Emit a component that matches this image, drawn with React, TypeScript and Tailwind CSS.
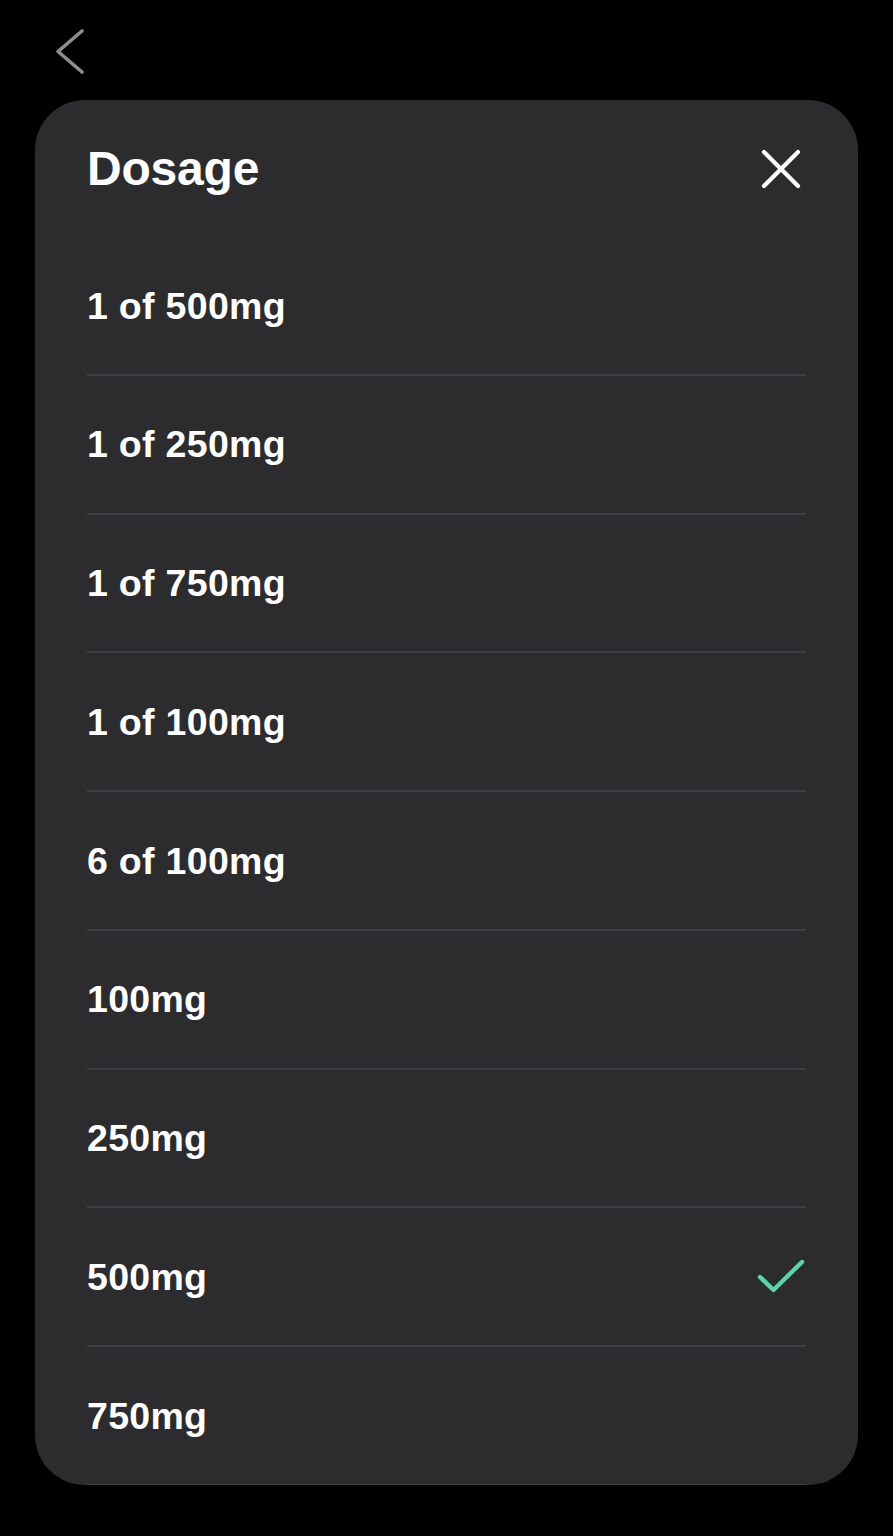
import React from "react";

const items = [
  "1 of 500mg",
  "1 of 250mg",
  "1 of 750mg",
  "1 of 100mg",
  "6 of 100mg",
  "100mg",
  "250mg",
  "500mg",
  "750mg",
];

export default function App() {
  return (
    <div
      className="w-[893px] h-[1536px] bg-black overflow-hidden"
      style={{ fontFamily: '"Liberation Sans", Arial, sans-serif' }}
    >
      <div className="h-[100px] pl-[55px] pt-[27px]">
        <svg width="30" height="48" viewBox="0 0 30 48" fill="none">
          <path d="M27 4 L3 24.5 L27 45" stroke="#8e8e92" strokeWidth="3.6" strokeLinecap="round" strokeLinejoin="round" />
        </svg>
      </div>
      <div className="px-[35px]">
        <div className="h-[1385px] rounded-[50px] bg-[#2c2c2e] overflow-hidden">
          <div className="h-[137px] flex items-center justify-between pl-[87px] pr-[57px] -ml-[35px]">
            <span className="text-[48px] font-bold text-white leading-none tracking-[-0.2px]">Dosage</span>
            <svg width="40" height="40" viewBox="0 0 40 40" fill="none">
              <path d="M3 3 L37 37 M37 3 L3 37" stroke="#ffffff" strokeWidth="4.2" strokeLinecap="round" />
            </svg>
          </div>
          <div className="ml-[52px] mr-[52px]">
            {items.map((t) => (
              <div key={t} className="h-[138.75px] flex items-center justify-between border-b-2 border-[#3e3e42]">
                <span className="text-[37.5px] font-bold text-white leading-none pt-[2px] tracking-[0.3px]">{t}</span>
                {t === "500mg" && (
                  <svg width="48" height="36" viewBox="0 0 48 36" fill="none" className="mr-[1px]">
                    <path d="M3 18 L16.5 31 L45 3" stroke="#5dd3ab" strokeWidth="4.4" strokeLinecap="round" strokeLinejoin="round" />
                  </svg>
                )}
              </div>
            ))}
          </div>
        </div>
      </div>
    </div>
  );
}
